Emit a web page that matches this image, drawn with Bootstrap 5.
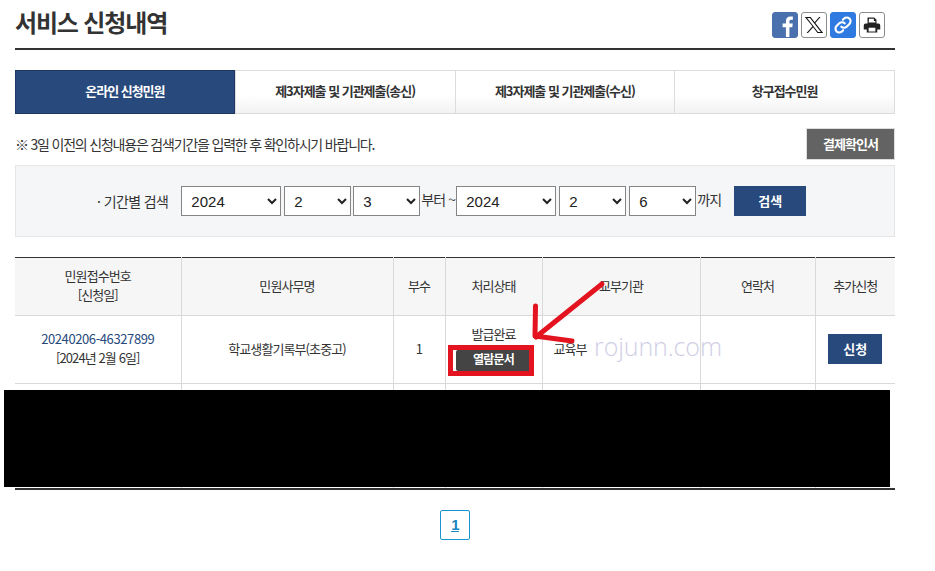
<!DOCTYPE html>
<html lang="ko">
<head>
<meta charset="utf-8">
<title>서비스 신청내역</title>
<link rel="stylesheet" href="https://cdn.jsdelivr.net/npm/bootstrap@5.3.0/dist/css/bootstrap.min.css">
<style>
html,body{height:571px;overflow:hidden;background:#fff}
body{font-family:"Noto Sans CJK KR","Noto Sans",sans-serif;color:#333;font-size:13px;letter-spacing:-.6px;position:relative}
.page-wrap{width:880px;margin-left:15px}
.title-bar{height:50px;border-bottom:2px solid #333;padding-bottom:8px}
.title-bar h1{font-size:24px;font-weight:700;margin:0;color:#333;letter-spacing:-1.15px;line-height:48px;height:48px;margin-top:-2px}
.share-row{gap:3px;margin-right:10px;padding-top:12px}
.share-ico{width:26px;height:26px;border-radius:3px;display:flex;align-items:center;justify-content:center;border:1px solid #8c8c8c;background:#fff;overflow:hidden}
.share-ico.fb{background:#4a71ad;border-color:#4a71ad}
.share-ico.lk{background:#2f7ae0;border-color:#2f7ae0}
.tab-row{margin-top:20px;height:44px;border:1px solid #dcdcdc;border-left:0}
.tab-cell{width:220px;height:44px;margin-top:-1px;padding-bottom:2px;display:flex;align-items:center;justify-content:center;font-weight:700;font-size:13px;color:#333;text-decoration:none;background:linear-gradient(#fff 55%,#f2f2f2);border:1px solid #dcdcdc;border-right:0;letter-spacing:-1.03px}
.tab-cell.on{background:#27497c;color:#fff;border:1px solid #1c3764}
.note-row{height:51px;padding-top:14px}
.note-txt{font-size:14px;letter-spacing:-1.2px;color:#333;margin-top:6px}
.pay-btn{width:89px;height:32px;background:#636363;border:1px solid #ddd;border-radius:0;color:#fff;font-size:13px;font-weight:700;padding:0;letter-spacing:-.95px}
.search-box{height:72px;background:#f5f6f8;border:1px solid #e6e6e6;gap:3px;padding-left:81px}
.search-box label{font-size:14px;color:#333;margin-right:10px;letter-spacing:-.6px}
.search-box select{height:30px;font-size:15px;font-family:"Liberation Sans",sans-serif;letter-spacing:0;background:#fff;border:1px solid #858585;border-radius:0;padding-left:5px;color:#222}
.sel-y{width:100px}.sel-m{width:67px}
.sel-tight{margin-left:-1px}
.sep{font-size:14px;color:#333;margin:-4px -2px 0 -2px;letter-spacing:-.9px}
.find-btn{width:72px;height:30px;background:#27497c;color:#fff;border:0;border-radius:0;font-size:13px;font-weight:700;padding:0;margin-left:12px}
.list-tbl{margin:20px 0 0;table-layout:fixed;width:880px;border-top:1px solid #333;border-bottom:2px solid #333;height:233px}
.list-tbl th,.list-tbl td{border:1px solid #d9d9d9;border-top:0;padding:0 0 3px;text-align:center;vertical-align:middle;color:#333;font-size:13px;line-height:19px;box-shadow:none;background:transparent;letter-spacing:-.9px}
.list-tbl tr:last-child td{border-bottom:0}
.list-tbl th:first-child,.list-tbl td:first-child{border-left:0}
.list-tbl th:last-child,.list-tbl td:last-child{border-right:0}
.list-tbl th{background:#f6f6f6;font-weight:400;height:58px}
.r1{height:68px}
.c1{width:166px}.c2{width:212px}.c3{width:52px}.c4{width:97px}.c5{width:158px}.c6{width:115px}.c7{width:80px}
.no-link{color:#27497c;text-decoration:none;letter-spacing:-.4px}
.list-tbl td.state-cell{padding-bottom:5px}
.list-tbl td.ask-cell{padding-bottom:1px}
.doc-btn{display:block;width:75px;height:21px;margin:7px auto 0;background:#444;color:#fff;border:0;border-radius:2px;font-size:12px;font-weight:700;line-height:18px;padding:0 0 2px;letter-spacing:-.8px}
.ask-btn{width:54px;height:30px;background:#27497c;color:#fff;border:0;border-radius:0;font-size:13px;font-weight:700;padding:0}
.left-txt{text-align:left!important;padding-left:11px!important}
.pager{margin-top:20px;height:30px}
.pg-num{width:30px;height:30px;border:1px solid #1a94cf;border-radius:2px;color:#1a86c0;font-weight:700;font-size:15px;text-decoration:underline;display:flex;align-items:center;justify-content:center;font-family:"Liberation Sans",sans-serif}
.mask-block{position:absolute;left:4px;top:390px;width:886px;height:97px;background:#000}
.red-box{position:absolute;left:448px;top:345px;width:86px;height:31px;border:5px solid #e3141f}
.arrow-art{position:absolute;left:525px;top:275px;width:90px;height:70px;pointer-events:none}
.mark-txt{position:absolute;left:594px;top:329px;font-family:"Open Sans",sans-serif;font-weight:300;font-size:25px;line-height:34px;letter-spacing:-.1px;color:#cfcfe6}
</style>
</head>
<body>
<div class="page-wrap">
  <div class="title-bar d-flex justify-content-between">
    <h1>서비스 신청내역</h1>
    <div class="share-row d-flex">
      <span class="share-ico fb"><svg width="26" height="26" viewBox="0 0 26 26"><path fill="#fff" d="M14 26V15.5h-3.600v-4H14V8.600C14 5.400 16 3.700 18.800 3.700c1.200 0 2.300.1 2.700.2v3.500h-1.900c-1.500 0-1.800.8-1.800 1.800v2.200h3.600l-.5 4H17.800V26z"/></svg></span>
      <span class="share-ico"><svg width="20" height="20" viewBox="0 0 24 24"><path fill="#111" fill-rule="evenodd" d="M1 2.300h7l4.800 6.400 5.400-6.400h1.700l-6.300 7.400L23 21.700h-6.800l-5.300-7-6.100 7H3.100l7-8.200zM3.700 3.500 16.800 20.500h3.500L7.200 3.500z"/></svg></span>
      <span class="share-ico lk"><svg width="20" height="20" viewBox="0 0 24 24" fill="none" stroke="#fff" stroke-width="2.600" stroke-linecap="round"><path d="M10 14a4.500 4.500 0 0 0 6.400 0l3.300-3.300a4.500 4.500 0 0 0-6.400-6.400l-1.500 1.500"/><path d="M14 10a4.500 4.500 0 0 0-6.400 0l-3.300 3.300a4.500 4.500 0 0 0 6.400 6.400l1.500-1.500"/></svg></span>
      <span class="share-ico"><svg width="18" height="18" viewBox="0 0 24 24"><path fill="#222" d="M6 2h9l3 3v5H6zM3.500 10h17A2.500 2.500 0 0 1 23 12.500V18h-4v4H5v-4H1v-5.500A2.500 2.500 0 0 1 3.500 10z"/><path fill="#fff" d="M7.500 15.500h9v5h-9zM8 3.500h6.500V6.500H16.500V8.500H7.500z"/></svg></span>
    </div>
  </div>

  <nav class="tab-row d-flex">
    <a class="tab-cell on" href="#">온라인 신청민원</a>
    <a class="tab-cell" href="#">제3자제출 및 기관제출(송신)</a>
    <a class="tab-cell" href="#">제3자제출 및 기관제출(수신)</a>
    <a class="tab-cell" href="#">창구접수민원</a>
  </nav>

  <div class="note-row d-flex justify-content-between align-items-start">
    <p class="note-txt mb-0">※ 3일 이전의 신청내용은 검색기간을 입력한 후 확인하시기 바랍니다.</p>
    <button class="btn pay-btn" type="button">결제확인서</button>
  </div>

  <form class="search-box d-flex align-items-center">
    <label>· 기간별 검색</label>
    <select class="sel-y"><option>2024</option></select>
    <select class="sel-m"><option>2</option></select>
    <select class="sel-m sel-tight"><option>3</option></select>
    <span class="sep">부터 ~</span>
    <select class="sel-y"><option>2024</option></select>
    <select class="sel-m"><option>2</option></select>
    <select class="sel-m"><option>6</option></select>
    <span class="sep">까지</span>
    <button class="btn find-btn" type="button">검색</button>
  </form>

  <table class="table list-tbl">
    <colgroup><col class="c1"><col class="c2"><col class="c3"><col class="c4"><col class="c5"><col class="c6"><col class="c7"></colgroup>
    <thead>
      <tr><th>민원접수번호<br>[신청일]</th><th>민원사무명</th><th>부수</th><th>처리상태</th><th>교부기관</th><th>연락처</th><th>추가신청</th></tr>
    </thead>
    <tbody>
      <tr class="r1">
        <td><a class="no-link" href="#">20240206-46327899</a><br>[2024년 2월 6일]</td>
        <td>학교생활기록부(초중고)</td>
        <td>1</td>
        <td class="state-cell">발급완료<button class="btn doc-btn" type="button">열람문서</button></td>
        <td class="left-txt">교육부</td>
        <td></td>
        <td class="ask-cell"><button class="btn ask-btn" type="button">신청</button></td>
      </tr>
      <tr><td></td><td></td><td></td><td></td><td></td><td></td><td></td></tr>
    </tbody>
  </table>

  <div class="pager d-flex justify-content-center"><a class="pg-num" href="#">1</a></div>
</div>

<div class="mask-block"></div>
<div class="red-box"></div>
<svg class="arrow-art" viewBox="0 0 90 70" fill="none" stroke="#e3141f" stroke-width="5" stroke-linecap="round" stroke-linejoin="round"><path d="M77 9 11 62"/><path d="M10.500 31 10 61l37 5"/></svg>
<div class="mark-txt">rojunn.com</div>
</body>
</html>
